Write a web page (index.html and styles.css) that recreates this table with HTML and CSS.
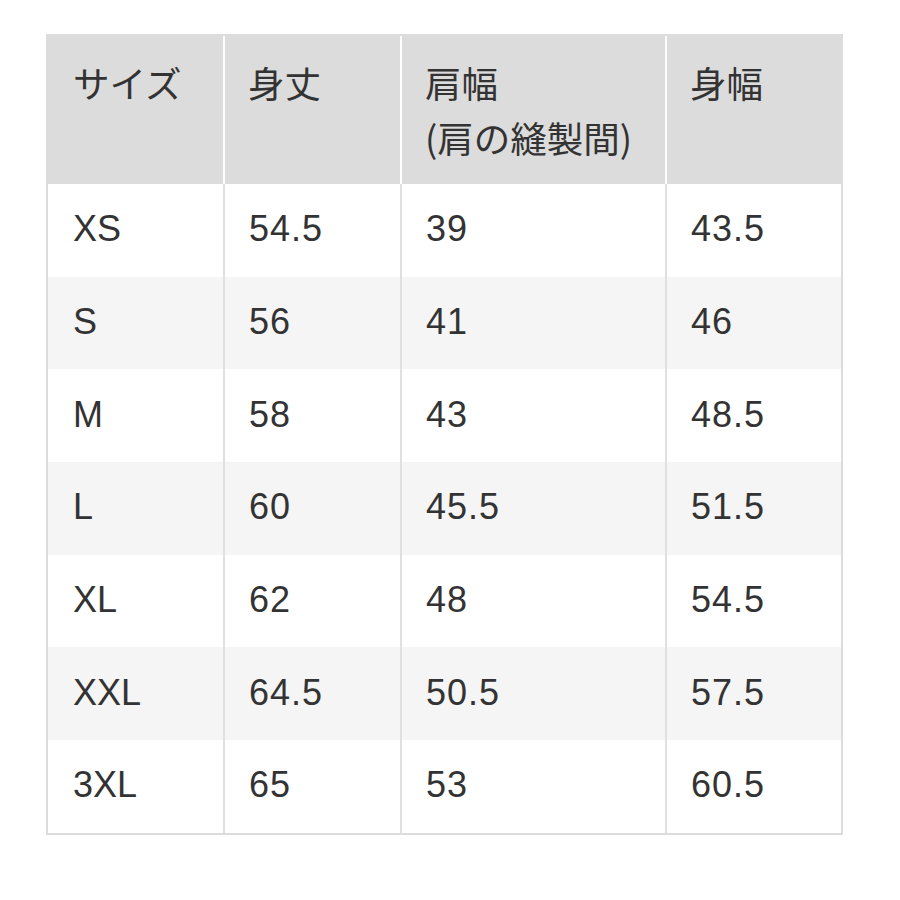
FILE: index.html
```html
<!DOCTYPE html>
<html lang="ja">
<head>
<meta charset="utf-8">
<title>サイズ表</title>
<link rel="stylesheet" href="styles.css">
</head>
<body>
<div class="page">
  <div class="sizes">
    <div class="cell head first">サイズ</div>
    <div class="cell head">身丈</div>
    <div class="cell head">肩幅<br>(肩の縫製間)</div>
    <div class="cell head">身幅</div>

    <div class="cell first">XS</div><div class="cell">54.5</div><div class="cell">39</div><div class="cell">43.5</div>
    <div class="cell first alt">S</div><div class="cell alt">56</div><div class="cell alt">41</div><div class="cell alt">46</div>
    <div class="cell first">M</div><div class="cell">58</div><div class="cell">43</div><div class="cell">48.5</div>
    <div class="cell first alt">L</div><div class="cell alt">60</div><div class="cell alt">45.5</div><div class="cell alt">51.5</div>
    <div class="cell first">XL</div><div class="cell">62</div><div class="cell">48</div><div class="cell">54.5</div>
    <div class="cell first alt">XXL</div><div class="cell alt">64.5</div><div class="cell alt">50.5</div><div class="cell alt">57.5</div>
    <div class="cell first">3XL</div><div class="cell">65</div><div class="cell">53</div><div class="cell">60.5</div>
  </div>
</div>
</body>
</html>
```

FILE: styles.css
```css
html, body {
  margin: 0;
  padding: 0;
  background: #ffffff;
}

.page {
  padding: 34px 0 0 46px;
}

.sizes {
  display: grid;
  grid-template-columns: 175px 177px 265px 176px;
  grid-template-rows: 148px repeat(7, 92.7px);
  width: fit-content;
  border: 2px solid #dcdcdc;
  font-family: "Liberation Sans", "Noto Sans CJK JP", sans-serif;
  font-size: 36px;
  color: #333333;
}

.cell {
  display: flex;
  align-items: center;
  padding: 0 0 2px 24px;
  border-left: 2px solid #e0e0e0;
  background: #ffffff;
  letter-spacing: 1px;
}

.cell.first {
  border-left: none;
  padding-left: 25px;
  letter-spacing: 0;
}

.cell.alt {
  background: #f5f5f5;
}

.cell.head {
  display: block;
  background: #dcdcdc;
  border-left-color: #ffffff;
  font-family: "Noto Sans CJK JP", sans-serif;
  font-size: 36.5px;
  line-height: 55px;
  letter-spacing: 0;
  padding: 19px 0 0 23px;
}

.cell.head.first {
  border-left: none;
  padding-left: 25px;
}
```
